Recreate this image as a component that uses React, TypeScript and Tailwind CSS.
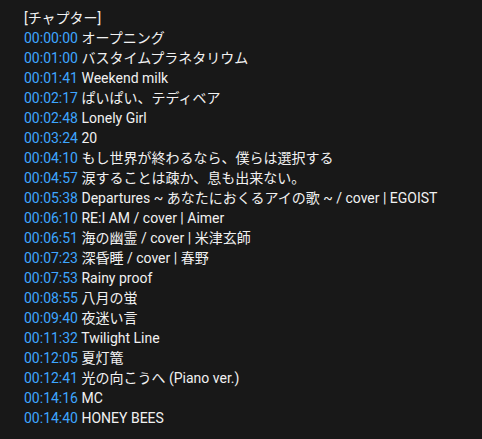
const chapters: [string, string][] = [
  ['00:00:00', 'オープニング'],
  ['00:01:00', 'バスタイムプラネタリウム'],
  ['00:01:41', 'Weekend milk'],
  ['00:02:17', 'ぱいぱい、テディベア'],
  ['00:02:48', 'Lonely Girl'],
  ['00:03:24', '20'],
  ['00:04:10', 'もし世界が終わるなら、僕らは選択する'],
  ['00:04:57', '涙することは疎か、息も出来ない。'],
  ['00:05:38', 'Departures ~ あなたにおくるアイの歌 ~ / cover | EGOIST'],
  ['00:06:10', 'RE:I AM / cover | Aimer'],
  ['00:06:51', '海の幽霊 / cover | 米津玄師'],
  ['00:07:23', '深昏睡 / cover | 春野'],
  ['00:07:53', 'Rainy proof'],
  ['00:08:55', '八月の蛍'],
  ['00:09:40', '夜迷い言'],
  ['00:11:32', 'Twilight Line'],
  ['00:12:05', '夏灯篭'],
  ['00:12:41', '光の向こうへ (Piano ver.)'],
  ['00:14:16', 'MC'],
  ['00:14:40', 'HONEY BEES'],
];

export default function App() {
  return (
    <div className="w-[482px] h-[439px] bg-[#181818] pl-6 pt-2 text-[14px] leading-5 text-[#f1f1f1] font-['Roboto','Noto_Sans_CJK_JP',sans-serif]">
      <div>[チャプター]</div>
      {chapters.map(([time, title]) => (
        <div key={time} className="whitespace-nowrap">
          <span className="text-[#3ea6ff]">{time}</span> {title}
        </div>
      ))}
    </div>
  );
}
